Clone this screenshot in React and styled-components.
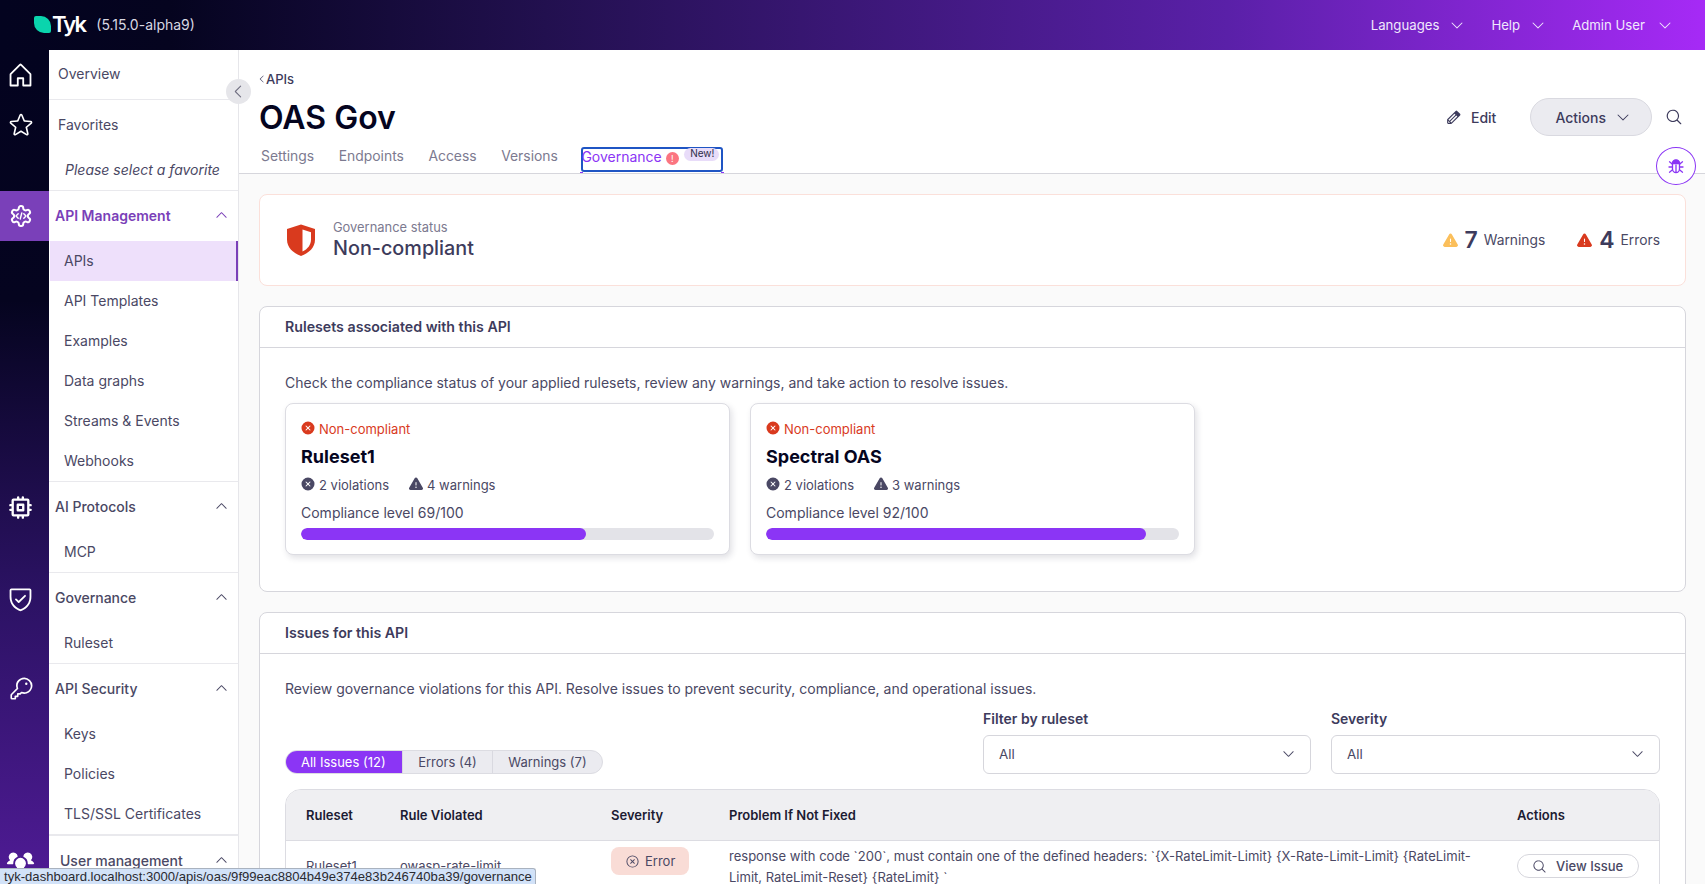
import React from "react";
import styled, { createGlobalStyle } from "styled-components";
import {
    PiHouse, PiStar, PiCpuBold, PiShieldCheck, PiKey, PiUsersThreeFill,
    PiPencilFill, PiWarningFill, PiXCircleFill, PiXCircle, PiMagnifyingGlass, PiCaretDown, PiCaretUp, PiCaretLeft
} from "react-icons/pi";

const GlobalStyle = createGlobalStyle`
    html, body {margin:0; padding:0; height:100%; overflow:hidden; background:#fff}
    body {font-family:Inter, "Liberation Sans", sans-serif; color:#3d3b5c; -webkit-font-smoothing:antialiased}
    * {box-sizing:border-box}
`;

const Page = styled.div`
    position:relative; display:flex; flex-direction:column; height:100vh; overflow:hidden;
`;

const TopBar = styled.header`
    display:flex; align-items:center; flex:0 0 50px; padding:0 32px 2px 34px;
    background:linear-gradient(90deg, #03031f 0%, #05041f 10%, #22104f 32%, #5a20a8 72%, #a62af6 100%);
    color:#fff;
`;

const Logo = styled.div`
    display:flex; align-items:center;
`;

const LogoMark = styled.span`
    width:17px; height:17px; background:#0ad4ad; border-radius:2px 10px 2px 10px; margin-right:1px;
`;

const LogoText = styled.span`
    font-size:22px; font-weight:600; letter-spacing:-1.8px; line-height:25px; margin-top:1px;
`;

const Version = styled.span`
    margin-left:11px; font-size:14px; color:#d9d8e2;
`;

const TopMenu = styled.nav`
    display:flex; margin:2px 0 0 auto; gap:26px;
`;

const TopMenuItem = styled.span`
    display:flex; align-items:center; gap:${p => p.$gap || 10}px; font-size:13.2px; font-weight:400; color:#f1e8fd;
    svg {font-size:16px}
`;

const Main = styled.div`
    display:flex; flex:1; min-height:0;
`;

const Side = styled.aside`
    flex:0 0 239px;
    background:linear-gradient(180deg, #03031f 0%, #05041f 30%, #2b1263 65%, #4f1b95 100%);
`;

const Section = styled.section`
    display:grid; grid-template-columns:49px 1fr;
`;

const RailCell = styled.div`
    display:flex; align-items:center; justify-content:center; height:50px; padding-right:8px; color:#fff;
    font-size:${p => p.$size || 25}px;
    background:${p => p.$active ? "#7a40b9" : "transparent"};
`;

const Panel = styled.div`
    background:#fff; border-right:1px solid #e6e6ea; border-bottom:${p => p.$thick ? 2 : 1}px solid #e9e9ed;
    height:${p => p.$h}px;
`;

const SectionHead = styled.div`
    display:flex; align-items:center; height:${p => p.$active ? 50 : 49}px;
    padding:0 9px ${p => p.$active ? 2 : 0}px ${p => p.$x || 6}px;
    font-size:14px; font-weight:${p => p.$active ? 600 : 500};
    color:${p => p.$active ? "#7a3fb8" : "#4a4864"};
    svg {margin-left:auto; font-size:15px}
`;

const PlainHead = styled(SectionHead)`
    padding-left:9px; font-weight:400; margin-top:${p => p.$up ? -1 : 0}px;
`;

const SubItem = styled.div`
    display:flex; align-items:center; height:40px; padding:0 0 ${p => p.$lift ? 2 : 0}px 14px; margin-left:1px;
    font-size:14px; color:#4a4864;
    ${p => p.$active && "background:#eee0fb; border-right:2px solid #7a3fb8;"}
`;

const Hint = styled.div`
    padding:12px 0 0 16px; font-size:14px; font-style:italic; color:#4a4864;
`;

const CollapseButton = styled.button`
    position:absolute; left:226px; top:79px; width:25px; height:25px; padding:0;
    display:flex; align-items:center; justify-content:center;
    border:0; border-radius:50%; background:#e6e6ea; color:#6f6e80; font-size:17px;
`;

const Content = styled.main`
    flex:1; min-width:0; background:#fafafa;
`;

const Header = styled.div`
    height:124px; padding:20px 22px 0 20px; background:#fff; border-bottom:1px solid #d6d6dc;
`;

const Crumb = styled.div`
    display:flex; align-items:center; height:18px; margin-left:-2px; font-size:13px; font-weight:500; color:#3d3b5c;
    svg {font-size:10px; margin-right:-1px}
`;

const TitleRow = styled.div`
    display:flex; align-items:center; height:38px; margin-top:10px;
`;

const Title = styled.h1`
    margin:0; font-size:32px; font-weight:600; color:#05051f;
`;

const EditLink = styled.span`
    display:flex; align-items:center; gap:9px; margin-left:auto; font-size:14px; font-weight:500;
    svg {font-size:17px}
`;

const ActionsButton = styled.span`
    display:flex; align-items:center; gap:9px; height:38px; margin-left:34px; padding:0 20px 0 24px;
    border:1px solid #d9d9e0; border-radius:19px; background:#ebebf0; font-size:14px; font-weight:500;
    svg {font-size:16px}
`;

const SearchIcon = styled(PiMagnifyingGlass)`
    margin-left:13px; font-size:18px;
`;

const BugButton = styled.span`
    position:absolute; left:1656px; top:147px; width:40px; height:38px;
    display:flex; align-items:center; justify-content:center;
    border:1px solid #8b35f5; border-radius:50%; background:#fff;
`;

const Tabs = styled.div`
    display:flex; align-items:flex-start; gap:24.5px; height:26px; margin:11px 0 0 2px;
`;

const Tab = styled.span`
    padding-top:1px; font-size:13.9px; line-height:17px; color:#7c7a90;
`;

const FocusTab = styled.span`
    position:relative; display:flex; align-items:flex-start; gap:4px; width:142px; height:25px;
    margin-left:-1px; border:2px solid #1f55c4; border-radius:3px; font-size:14px; line-height:15px; color:#8b35f5;
    text-indent:-2px;
    &:after {
        content:""; position:absolute; left:-3px; right:-3px; bottom:-3px; height:1px;
        background:linear-gradient(90deg, #8b35f5 3px, transparent 3px, transparent calc(100% - 3px), #8b35f5 calc(100% - 3px));
    }
`;

const AlertDot = styled.span`
    display:flex; align-items:center; justify-content:center; width:13px; height:13px; margin-top:3px;
    border-radius:50%; background:#fb7580; color:#fff; font-size:9px; line-height:13px; text-indent:0;
`;

const NewBadge = styled.span`
    position:absolute; right:2px; top:-1px; padding:0 5px 0 6px; height:13px; line-height:11px; text-indent:0;
    border-radius:7px; background:#e8dcf9; color:#2e2c48; font-size:10px;
`;

const Body = styled.div`
    padding:20px 19px 0 20px;
`;

const StatusCard = styled.div`
    display:flex; align-items:center; height:92px; padding:0 25px 0 26px;
    border:1px solid #fbe0da; border-radius:8px; background:#fff;
`;

const ShieldIcon = styled.svg`
    flex:none; width:30px; height:32px; margin-right:17px;
`;

const StatusText = styled.div`
    padding-top:1px;
`;

const StatusLabel = styled.div`
    font-size:12.9px; line-height:16px; color:#7c7a90;
`;

const StatusValue = styled.div`
    font-size:19.8px; font-weight:500; line-height:25px; color:#3d3b5c;
`;

const Counts = styled.div`
    display:flex; align-items:center; margin-left:auto;
`;

const Count = styled.span`
    display:flex; align-items:center; margin-left:31px; font-size:13.8px; color:${p => p.$color};
    b {margin:0 6px 0 6px; font-size:23px; font-weight:600; color:#3d3b5c}
    span {color:#4a4864}
    svg {font-size:17px}
`;

const Card = styled.div`
    margin-top:20px; border:1px solid #d6d6dc; border-radius:8px; background:#fff;
    ${p => p.$open && "border-bottom-left-radius:0; border-bottom-right-radius:0;"}
`;

const CardHead = styled.div`
    height:41px; padding:0 25px 1px; display:flex; align-items:center;
    border-bottom:1px solid #d6d6dc; font-size:14.2px; font-weight:600; color:#3d3b5c;
`;

const CardBody = styled.div`
    padding:25px 25px ${p => p.$bottom || 0}px;
`;

const Intro = styled.p`
    margin:0; font-size:14px; line-height:20px; color:#4a4864;
`;

const RulesetRow = styled.div`
    display:flex; gap:20px; margin-top:10px;
`;

const RulesetCard = styled.div`
    width:445px; height:152px; padding:15px 15px 0;
    border:1px solid #dcdce2; border-radius:8px; background:#fff;
    box-shadow:2px 3px 6px rgba(40, 40, 70, 0.14);
`;

const Verdict = styled.div`
    display:flex; align-items:center; gap:3px; height:20px; font-size:13px; color:#d93a1e;
    svg {font-size:16px; margin:-2px 0 0 -1px}
`;

const RulesetName = styled.div`
    margin-top:6px; font-size:18px; line-height:24px; font-weight:700; color:#05051f;
`;

const Stats = styled.div`
    display:flex; gap:20px; margin-top:6px;
`;

const Stat = styled.span`
    display:flex; align-items:center; gap:3px; height:20px; font-size:13px; color:#4a4864;
    svg {font-size:16px; margin:-2px 0 0 -1px}
`;

const Level = styled.div`
    margin-top:8px; font-size:14px; line-height:20px; color:#4a4864;
`;

const Track = styled.div`
    height:12px; margin-top:5px; border-radius:6px; background:#e3e3e8; overflow:hidden;
`;

const Fill = styled.div`
    height:100%; border-radius:6px; background:#8b35f5;
`;

const FilterRow = styled.div`
    display:flex; align-items:flex-end; margin-top:11px;
`;

const Pills = styled.div`
    display:flex; height:24px; margin:0 auto 0 0; border-radius:12px; background:#ebebf0; overflow:hidden;
    border:1px solid #dcdce2;
`;

const Pill = styled.span`
    display:flex; align-items:center; padding:0 15px 0 15.5px; margin:-1px 0; font-size:13px;
    color:${p => p.$active ? "#fff" : "#4a4864"};
    background:${p => p.$active ? "#8b35f5" : "transparent"};
    ${p => p.$active && "margin-left:-1px; padding:0 16px;"}
    & + & {border-left:1px solid #d9d9e0}
`;

const Filter = styled.div`
    width:${p => p.$w}px; margin-left:${p => p.$gap}px;
`;

const FilterLabel = styled.div`
    font-size:14px; line-height:18px; font-weight:600; color:#3d3b5c; margin-bottom:7px;
`;

const SelectBox = styled.div`
    display:flex; align-items:center; justify-content:space-between; height:39px; padding:0 14px 2px 15px;
    border:1px solid #d6d6dc; border-radius:6px; background:#fff; font-size:13.4px; color:#4a4864;
    svg {font-size:15px}
`;

const Table = styled.div`
    margin-top:15px; border:1px solid #dcdce2; border-radius:16px 16px 0 0; overflow:hidden;
`;

const TableRow = styled.div`
    display:grid; grid-template-columns:94px 211px 118px 788px 143px; min-height:50px; padding-left:20px;
`;

const HeadRow = styled(TableRow)`
    height:51px; align-items:center; background:#efeff2; border-bottom:1px solid #dcdce2;
    font-size:13px; font-weight:600; color:#1c1b33;
`;

const Cell = styled.div`
    align-self:center; font-size:13px; color:#4a4864;
`;

const ErrorBadge = styled.span`
    display:inline-flex; align-items:center; gap:5px; width:78px; height:28px; margin-top:6px; padding-left:14px;
    border-radius:8px; background:#f9dcd6; font-size:13px; color:#4a4864;
    svg {font-size:15px}
`;

const Problem = styled.div`
    width:745px; padding-top:5px; font-size:13.03px; line-height:21px; color:#4a4864;
`;

const ViewButton = styled.span`
    display:inline-flex; align-items:center; gap:9px; width:122px; height:24px; padding-left:14px;
    border:1px solid #d6d6dc; border-radius:12px; background:#fff; font-size:13px; font-weight:500; color:#4a4864;
    svg {font-size:15px}
`;

const LinkPreview = styled.div`
    position:absolute; left:0; bottom:0; width:536px; height:16px; padding-left:4px;
    border:1px solid #a9b2bf; border-left:0; border-bottom:0; border-top-right-radius:3px;
    background:#d2e2f8; font-family:"Liberation Sans", sans-serif; font-size:13.1px; line-height:15px; color:#2a2a30;
    white-space:nowrap; overflow:hidden;
`;

const ApiGear = () => (
    <svg width="24" height="24" viewBox="0 0 24 24" fill="none" stroke="#fff" strokeWidth="2" strokeLinejoin="round" strokeLinecap="round">
        <path d="M12.22 2h-.44a2 2 0 0 0-2 2v.18a2 2 0 0 1-1 1.73l-.43.25a2 2 0 0 1-2 0l-.15-.08a2 2 0 0 0-2.73.73l-.22.38a2 2 0 0 0 .73 2.73l.15.1a2 2 0 0 1 1 1.72v.51a2 2 0 0 1-1 1.74l-.15.09a2 2 0 0 0-.73 2.73l.22.38a2 2 0 0 0 2.73.73l.15-.08a2 2 0 0 1 2 0l.43.25a2 2 0 0 1 1 1.73V20a2 2 0 0 0 2 2h.44a2 2 0 0 0 2-2v-.18a2 2 0 0 1 1-1.73l.43-.25a2 2 0 0 1 2 0l.15.08a2 2 0 0 0 2.73-.73l.22-.39a2 2 0 0 0-.73-2.73l-.15-.08a2 2 0 0 1-1-1.74v-.5a2 2 0 0 1 1-1.74l.15-.09a2 2 0 0 0 .73-2.73l-.22-.38a2 2 0 0 0-2.73-.73l-.15.08a2 2 0 0 1-2 0l-.43-.25a2 2 0 0 1-1-1.73V4a2 2 0 0 0-2-2z" />
        <path d="M9.200 9.700L7 12l2.200 2.300M14.800 9.700L17 12l-2.200 2.300M12.800 9l-1.600 6" strokeWidth="1.4" />
    </svg>
);

const BugIcon = () => (
    <svg width="16" height="16" viewBox="0 0 16 16" fill="none" stroke="#8b35f5" strokeWidth="1.300" strokeLinecap="round">
        <path d="M4.300 5.500a3.700 3.700 0 0 1 7.400 0z" fill="#8b35f5" />
        <path d="M4.500 6v5a3.500 3.500 0 0 0 7 0V6M8 7v7.200" />
        <path d="M1.500 3.800l3 2.400M14.500 3.800l-3 2.400M1 9h3.500M15 9h-3.500M1.500 14.200l3-2.400M14.500 14.200l-3-2.400" />
    </svg>
);

const SubList = ({ items, active, lift }) => items.map(item => (
    <SubItem key={item} $active={item === active} $lift={lift}>{item}</SubItem>
));

const NavSection = ({ icon, size, title, items, height, active, thick, x }) => (
    <Section>
        <RailCell $active={active} $size={size}>{icon}</RailCell>
        <Panel $h={height} $thick={thick}>
            <SectionHead $active={active} $x={x}>{title}<PiCaretUp /></SectionHead>
            <SubList items={items} active="APIs" lift={active} />
        </Panel>
    </Section>
);

const Sidebar = () => (
    <Side>
        <Section>
            <RailCell $size={29}><PiHouse /></RailCell>
            <Panel $h={50}><PlainHead $up>Overview</PlainHead></Panel>
        </Section>
        <Section>
            <RailCell $size={26}><PiStar /></RailCell>
            <Panel $h={91}>
                <PlainHead>Favorites</PlainHead>
                <Hint>Please select a favorite</Hint>
            </Panel>
        </Section>
        <NavSection active icon={<ApiGear />} title="API Management" height={291}
            items={["APIs", "API Templates", "Examples", "Data graphs", "Streams & Events", "Webhooks"]} />
        <NavSection icon={<PiCpuBold />} title="AI Protocols" height={91} items={["MCP"]} />
        <NavSection icon={<PiShieldCheck />} size={29} title="Governance" height={91} items={["Ruleset"]} />
        <NavSection icon={<PiKey />} size={26} title="API Security" height={172} thick items={["Keys", "Policies", "TLS/SSL Certificates"]} />
        <NavSection icon={<PiUsersThreeFill />} size={29} title="User management" x={11} height={60} items={[]} />
    </Side>
);

const rulesets = [
    { name: "Ruleset1", violations: 2, warnings: 4, level: 69 },
    { name: "Spectral OAS", violations: 2, warnings: 3, level: 92 }
];

const App = () => (
    <Page>
        <GlobalStyle />
        <TopBar>
            <Logo><LogoMark /><LogoText>Tyk</LogoText></Logo>
            <Version>(5.15.0-alpha9)</Version>
            <TopMenu>
                <TopMenuItem>Languages <PiCaretDown /></TopMenuItem>
                <TopMenuItem>Help <PiCaretDown /></TopMenuItem>
                <TopMenuItem $gap={12}>Admin User <PiCaretDown /></TopMenuItem>
            </TopMenu>
        </TopBar>
        <Main>
            <Sidebar />
            <Content>
                <Header>
                    <Crumb><PiCaretLeft />APIs</Crumb>
                    <TitleRow>
                        <Title>OAS Gov</Title>
                        <EditLink><PiPencilFill />Edit</EditLink>
                        <ActionsButton>Actions <PiCaretDown /></ActionsButton>
                        <SearchIcon />
                    </TitleRow>
                    <Tabs>
                        <Tab>Settings</Tab>
                        <Tab>Endpoints</Tab>
                        <Tab>Access</Tab>
                        <Tab>Versions</Tab>
                        <FocusTab>Governance <AlertDot>!</AlertDot><NewBadge>New!</NewBadge></FocusTab>
                    </Tabs>
                </Header>
                <Body>
                    <StatusCard>
                        <ShieldIcon viewBox="0 0 30 32">
                            <path d="M15 .5L29 5v10.500c0 8-6 13.500-14 16.500C7 29 1 23.500 1 15.500V5z" fill="#d93a1e" />
                            <path d="M16.500 5.500l8.500 2.800v7.200c0 5.500-3.500 9.600-8.500 12z" fill="#fff" />
                        </ShieldIcon>
                        <StatusText>
                            <StatusLabel>Governance status</StatusLabel>
                            <StatusValue>Non-compliant</StatusValue>
                        </StatusText>
                        <Counts>
                            <Count $color="#fbbf5b"><PiWarningFill /><b>7</b><span>Warnings</span></Count>
                            <Count $color="#d93a1e"><PiWarningFill /><b>4</b><span>Errors</span></Count>
                        </Counts>
                    </StatusCard>
                    <Card>
                        <CardHead>Rulesets associated with this API</CardHead>
                        <CardBody $bottom={36}>
                            <Intro>Check the compliance status of your applied rulesets, review any warnings, and take action to resolve issues.</Intro>
                            <RulesetRow>
                                {rulesets.map(set => (
                                    <RulesetCard key={set.name}>
                                        <Verdict><PiXCircleFill />Non-compliant</Verdict>
                                        <RulesetName>{set.name}</RulesetName>
                                        <Stats>
                                            <Stat><PiXCircleFill />{set.violations} violations</Stat>
                                            <Stat><PiWarningFill />{set.warnings} warnings</Stat>
                                        </Stats>
                                        <Level>Compliance level {set.level}/100</Level>
                                        <Track><Fill style={{ width: `${set.level}%` }} /></Track>
                                    </RulesetCard>
                                ))}
                            </RulesetRow>
                        </CardBody>
                    </Card>
                    <Card $open>
                        <CardHead>Issues for this API</CardHead>
                        <CardBody>
                            <Intro>Review governance violations for this API. Resolve issues to prevent security, compliance, and operational issues.</Intro>
                            <FilterRow>
                                <Pills>
                                    <Pill $active>All Issues (12)</Pill>
                                    <Pill>Errors (4)</Pill>
                                    <Pill>Warnings (7)</Pill>
                                </Pills>
                                <Filter $w={328}>
                                    <FilterLabel>Filter by ruleset</FilterLabel>
                                    <SelectBox>All <PiCaretDown /></SelectBox>
                                </Filter>
                                <Filter $w={329} $gap={20}>
                                    <FilterLabel>Severity</FilterLabel>
                                    <SelectBox>All <PiCaretDown /></SelectBox>
                                </Filter>
                            </FilterRow>
                            <Table>
                                <HeadRow>
                                    <span>Ruleset</span>
                                    <span>Rule Violated</span>
                                    <span>Severity</span>
                                    <span>Problem If Not Fixed</span>
                                    <span>Actions</span>
                                </HeadRow>
                                <TableRow>
                                    <Cell>Ruleset1</Cell>
                                    <Cell>owasp-rate-limit</Cell>
                                    <div><ErrorBadge><PiXCircle />Error</ErrorBadge></div>
                                    <Problem>response with code `200`, must contain one of the defined headers: `{"{X-RateLimit-Limit} {X-Rate-Limit-Limit} {RateLimit-Limit, RateLimit-Reset} {RateLimit}"} `</Problem>
                                    <Cell><ViewButton><PiMagnifyingGlass />View Issue</ViewButton></Cell>
                                </TableRow>
                            </Table>
                        </CardBody>
                    </Card>
                </Body>
            </Content>
        </Main>
        <CollapseButton><PiCaretLeft /></CollapseButton>
        <BugButton><BugIcon /></BugButton>
        <LinkPreview>tyk-dashboard.localhost:3000/apis/oas/9f99eac8804b49e374e83b246740ba39/governance</LinkPreview>
    </Page>
);

export default App;
